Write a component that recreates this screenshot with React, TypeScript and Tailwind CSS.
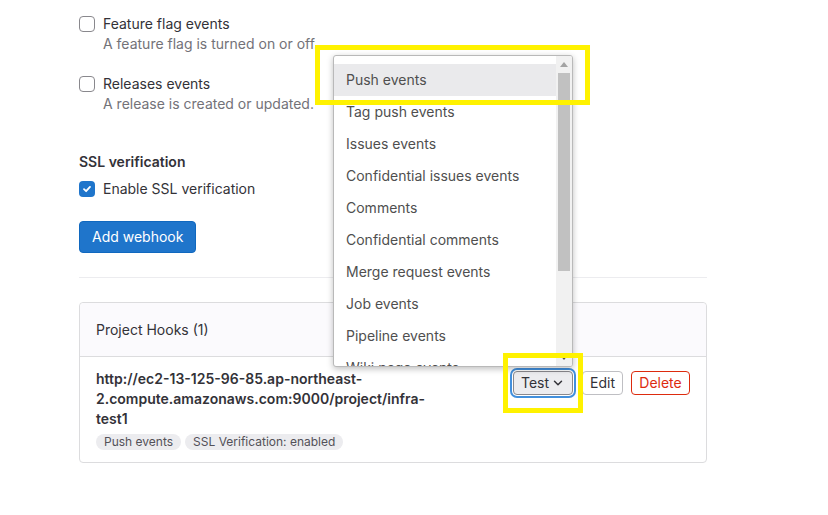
import { ChevronDown } from 'lucide-react'

const events = [
  'Push events',
  'Tag push events',
  'Issues events',
  'Confidential issues events',
  'Comments',
  'Confidential comments',
  'Merge request events',
  'Job events',
  'Pipeline events',
  'Wiki page events',
]

function Checkbox({ checked }: { checked?: boolean }) {
  if (checked) {
    return (
      <span className="mt-[2px] flex h-4 w-4 shrink-0 items-center justify-center rounded-[4px] bg-[#1f75cb]">
        <svg width="10" height="10" viewBox="0 0 10 10" fill="none">
          <path d="M2 5.2 4.1 7.2 8 2.9" stroke="#fff" strokeWidth="1.8" strokeLinecap="round" strokeLinejoin="round" />
        </svg>
      </span>
    )
  }
  return <span className="mt-[2px] h-4 w-4 shrink-0 rounded-[4px] border border-[#89888d] bg-white" />
}

function EventOption({ label, help }: { label: string; help: string }) {
  return (
    <div className="flex gap-2">
      <Checkbox />
      <div>
        <div className="text-sm leading-5 text-[#333238]">{label}</div>
        <div className="text-sm leading-5 text-[#737278]">{help}</div>
      </div>
    </div>
  )
}

export default function App() {
  return (
    <div className="relative h-[515px] w-[828px] overflow-hidden bg-white font-['Inter',sans-serif]">
      <div className="ml-[79px] w-[628px] pt-[14px]">
        <div className="flex flex-col gap-5">
          <EventOption label="Feature flag events" help="A feature flag is turned on or off." />
          <EventOption label="Releases events" help="A release is created or updated." />
        </div>

        <h3 className="mt-[38px] text-sm font-semibold leading-5 text-[#333238]">SSL verification</h3>
        <div className="mt-[7px] flex gap-2">
          <Checkbox checked />
          <span className="text-sm leading-5 text-[#333238]">Enable SSL verification</span>
        </div>

        <button className="mt-[22px] h-8 rounded-[4px] border border-[#1068bf] bg-[#1f75cb] px-3 text-sm text-white">
          Add webhook
        </button>

        <div className="mt-6 border-t border-[#ececef]" />

        <div className="mt-6 rounded-[4px] border border-[#dcdcde]">
          <div className="flex h-[54px] items-center rounded-t-[4px] border-b border-[#dcdcde] bg-[#fbfafd] px-4 text-sm text-[#333238]">
            Project Hooks (1)
          </div>
          <div className="flex justify-between px-4 py-3">
            <div>
              <div className="max-w-[345px] text-sm font-semibold leading-5 text-[#333238]">
                http://ec2-13-125-96-85.ap-northeast-2.compute.amazonaws.com:9000/project/infra-test1
              </div>
              <div className="mt-[5px] flex gap-1">
                <span className="h-4 rounded-full bg-[#ececef] px-2 text-xs leading-4 text-[#535158]">Push events</span>
                <span className="h-4 rounded-full bg-[#ececef] px-2 text-xs leading-4 text-[#535158]">
                  SSL Verification: enabled
                </span>
              </div>
            </div>
            <div className="mt-[2px] flex items-start">
              <button className="flex h-6 w-[60px] items-center justify-center gap-[2px] rounded-[4px] border border-[#89888d] bg-[#ececef] text-sm text-[#333238] shadow-[0_0_0_1px_#fff,0_0_0_3px_#428fdc]">
                Test
                <ChevronDown size={14} strokeWidth={2.5} />
              </button>
              <button className="ml-[9px] h-6 w-[41px] rounded-[4px] border border-[#bfbfc3] bg-white text-sm text-[#333238]">
                Edit
              </button>
              <button className="ml-2 h-6 w-[59px] rounded-[4px] border border-[#dd2b0e] bg-white text-sm text-[#dd2b0e]">
                Delete
              </button>
            </div>
          </div>
        </div>
      </div>

      {/* native-like select popup */}
      <div className="absolute left-[333px] top-[55px] flex h-[312px] w-[240px] overflow-hidden rounded-[3px] border border-[#b9b9b9] bg-white shadow-[0_2px_6px_rgba(0,0,0,0.25)]">
        <div className="flex-1 pt-[8px]">
          {events.map((e, i) => (
            <div
              key={e}
              className={`flex h-8 items-center pl-3 text-sm text-[#4f4f4f] ${i === 0 ? 'bg-[#eaeaec]' : ''}`}
            >
              {e}
            </div>
          ))}
        </div>
        <div className="flex w-[16px] flex-col bg-[#f1f1f1]">
          <div className="flex h-[17px] items-center justify-center">
            <svg width="8" height="5" viewBox="0 0 8 5">
              <path d="M0 5 4 0 8 5Z" fill="#a3a3a3" />
            </svg>
          </div>
          <div className="mx-[2px] h-[198px] bg-[#c1c1c1]" />
          <div className="flex-1" />
          <div className="flex h-[17px] items-center justify-center">
            <svg width="8" height="5" viewBox="0 0 8 5">
              <path d="M0 0 4 5 8 0Z" fill="#505050" />
            </svg>
          </div>
        </div>
      </div>

      {/* highlight boxes */}
      <div className="absolute left-[315px] top-[45px] h-[60px] w-[275px] border-[5px] border-[#fff200]" />
      <div className="absolute left-[503px] top-[353px] h-[60px] w-[80px] border-[5px] border-[#fff200]" />
    </div>
  )
}
